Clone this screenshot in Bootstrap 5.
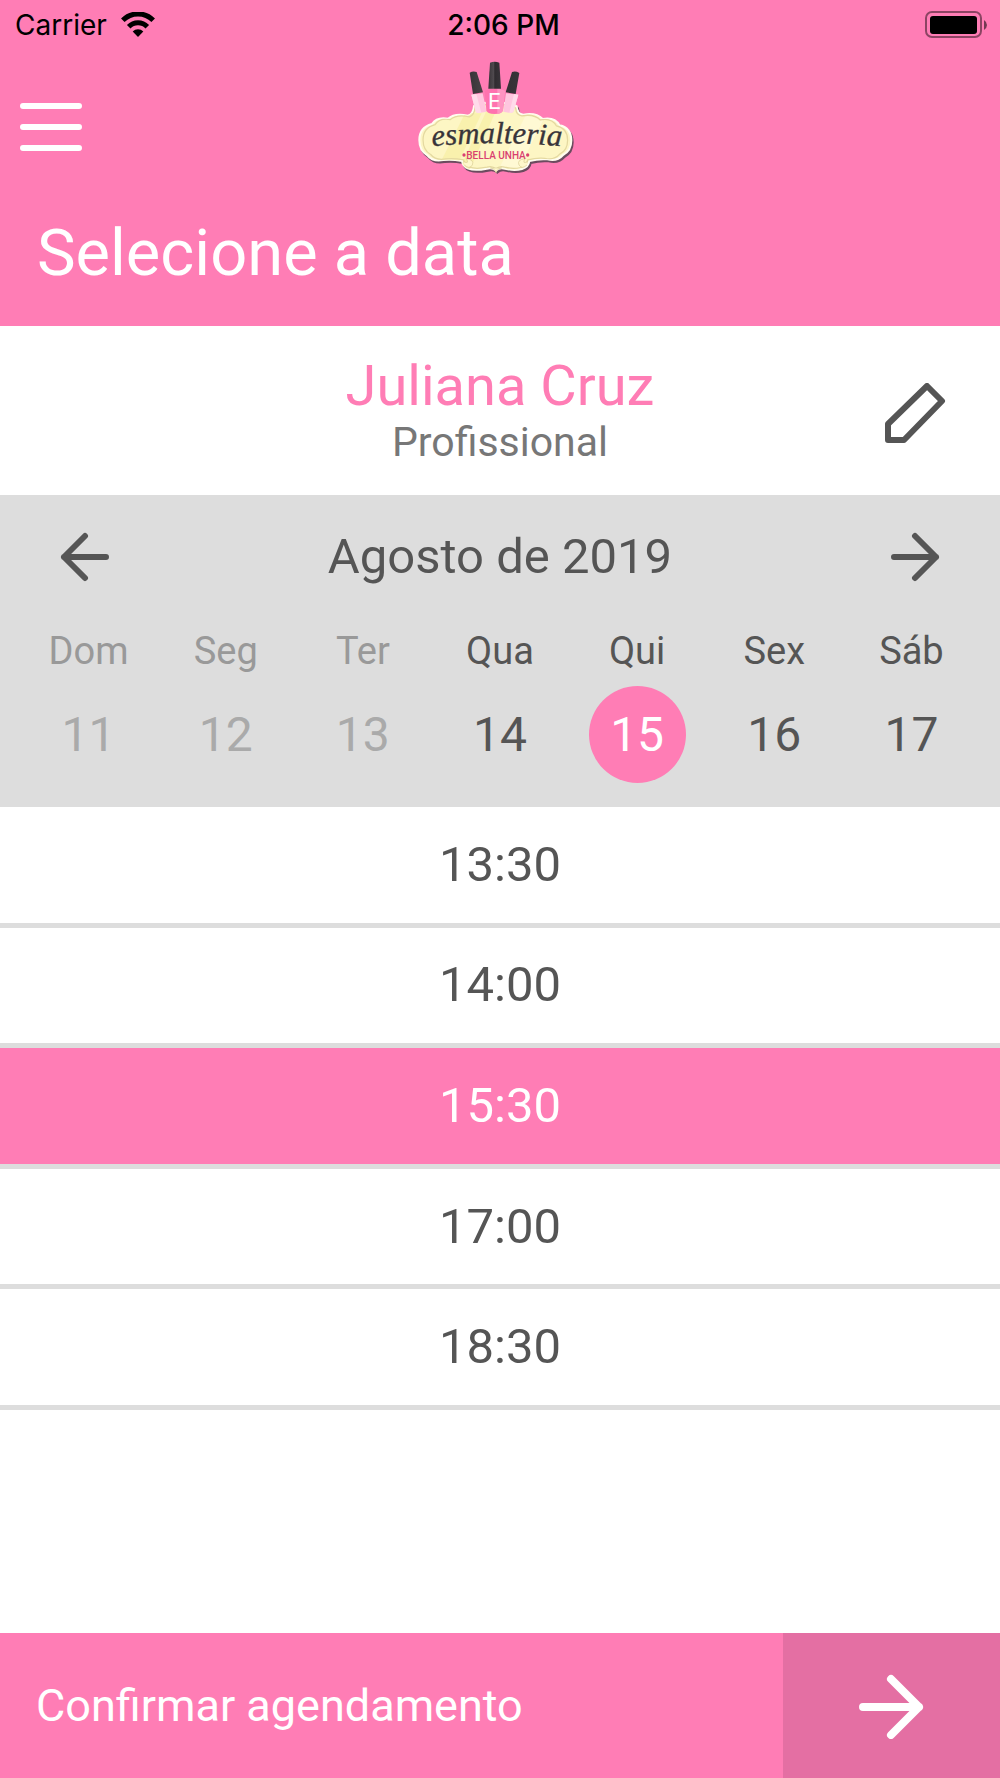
<!DOCTYPE html>
<html lang="pt-BR">
<head>
<meta charset="utf-8">
<meta name="viewport" content="width=device-width, initial-scale=1">
<title>Selecione a data</title>
<link href="https://cdn.jsdelivr.net/npm/bootstrap@5.3.0/dist/css/bootstrap.min.css" rel="stylesheet">
<style>
  :root { --pink: #ff7db5; --pink-dark: #e46fa3; --ink: #555; --line: #ddd; }
  body { font-family: Roboto, "Liberation Sans", sans-serif; color: var(--ink); background: #fff; }
  .btn { --bs-btn-padding-x: 0; --bs-btn-padding-y: 0; --bs-btn-border-width: 0; --bs-btn-border-radius: 0; color: inherit; }
  svg { display: block; }
  .brand-bg { background: var(--pink); color: #fff; }
  .status-bar { height: 50px; padding: 0 12px 0 15px; color: #000; font: 28px/50px Inter, sans-serif; }
  .status-bar .clock { font-weight: 500; padding: 0 8px 0 12px; }
  .signal { gap: 14px; }
  .top-nav { padding: 0 20px; }
  .side-slot { flex: 0 0 62px; }
  .page-title { font-size: 65px; line-height: 80px; font-weight: 400; padding: 9px 37px 33px; }
  .pro-bar { padding: 32px 0 25px; }
  .pro-name { font-size: 56px; line-height: 56px; font-weight: 400; color: var(--pink); }
  .pro-role { font-size: 41px; line-height: 56px; color: #777; }
  .edge-slot { flex: 0 0 170px; }
  .calendar { background: var(--line); padding-bottom: 24px; }
  .month { font-size: 49px; line-height: 124px; font-weight: 400; }
  .week { padding: 0 20px; }
  .weekday { font-size: 38px; line-height: 64px; margin-bottom: 3px; }
  .btn.day { width: 97px; height: 97px; border-radius: 50%; font-size: 48px; line-height: 97px; }
  .day-off .weekday { color: #999; }
  .btn.day:disabled { color: #aaa; opacity: 1; }
  .btn.day.chosen { background: var(--pink); color: #fff; }
  .slots { min-height: 603px; --bs-list-group-border-radius: 0; }
  .slots .list-group-item { border: 0; border-bottom: 5px solid var(--line); font-size: 49px; line-height: 56px; color: var(--ink); }
  .slots .list-group-item.active { margin: 0; background: var(--pink); color: #fff; }
  .confirm { min-height: 145px; font-size: 45px; line-height: 56px; }
  .confirm-label { padding: 0 36px; }
  .confirm-go { flex: 0 0 217px; background: var(--pink-dark); }
</style>
<script src="https://cdn.jsdelivr.net/npm/bootstrap@5.3.0/dist/js/bootstrap.bundle.min.js" defer></script>
</head>
<body>
<div class="d-flex flex-column min-vh-100">
  <header class="brand-bg">
    <div class="status-bar d-flex align-items-center">
      <div class="col d-flex align-items-center signal">
        <span>Carrier</span>
        <svg width="34" height="26" viewBox="0 0 34 26" fill="none" stroke="#000" stroke-width="5" aria-hidden="true">
          <path d="M1.800 8.200a21.500 21.500 0 0 1 30.400 0"/><path d="M7.700 14.700a13 13 0 0 1 18.600 0"/>
          <path d="M11.700 19.500a7.500 7.500 0 0 1 10.600 0L17 25z" fill="#000" stroke="none"/>
        </svg>
      </div>
      <div class="clock">2:06 PM</div>
      <div class="col d-flex justify-content-end">
        <svg width="64" height="28" viewBox="0 0 64 28" aria-hidden="true">
          <rect x="2" y="1" width="55" height="25" rx="6" fill="none" stroke="#000" stroke-opacity=".45" stroke-width="2"/>
          <rect x="6" y="5" width="47" height="18" rx="3"/>
          <path d="M60 9q3 2 3 5t-3 5z" fill-opacity=".55"/>
        </svg>
      </div>
    </div>
    <nav class="top-nav d-flex align-items-center justify-content-between">
      <button type="button" class="btn side-slot" aria-label="Menu">
        <svg width="62" height="50" viewBox="0 0 62 50" stroke="#fff" stroke-width="6" stroke-linecap="round"><path d="M3 4h56M3 25h56M3 46h56"/></svg>
      </button>
      <svg width="200" height="154" viewBox="0 0 600 462" role="img" aria-label="Esmalteria Bella Unha">
        <defs>
          <path id="plate" d="M288 362 Q277 351 260 356 Q225 363 205 356 Q188 350 186 333 Q155 327 130 330 Q98 336 82 316 Q58 302 58 270 Q58 232 96 222 Q110 200 144 206 Q164 188 204 197 Q220 192 222 168 Q240 155 286 160 Q332 155 350 169 Q352 193 370 194 Q408 187 428 207 Q464 200 479 226 Q514 234 514 271 Q514 303 489 315 Q472 335 442 328 Q415 326 388 333 Q386 351 366 357 Q342 363 315 356 Q298 351 288 362Z"/>
          <linearGradient id="cap" x1="0" x2="1"><stop offset="0" stop-color="#393438"/><stop offset=".45" stop-color="#514b50"/><stop offset=".5" stop-color="#302c30"/><stop offset="1" stop-color="#39343a"/></linearGradient>
          <clipPath id="plate-clip"><use href="#plate"/></clipPath>
          <path id="word-line" d="M97 289Q280 270 490 289"/>
        </defs>
        <use href="#plate" fill="#6b4b5f" stroke="#6b4b5f" stroke-width="6" transform="translate(4 6)"/>
        <use href="#plate" fill="#fdf6c4" stroke="#fffdf0" stroke-width="6"/>
        <g clip-path="url(#plate-clip)">
          <path d="M195 190h50L160 370h-55zM270 160h28L205 370h-32z" fill="#f7efa5" opacity=".75"/>
          <path d="M380 190h60l-90 180h-60z" fill="#fffbdc" opacity=".7"/>
          <use href="#plate" fill="none" stroke="#e4d9a0" stroke-width="4" transform="translate(14 13) scale(.951)"/>
        </g>
        <path d="M191 335q18 8 8-9 25 3 18 19-9 14-24 0M383 335q-18 8-8-9-25 3-18 19 9 14 24 0M288 368q-5-14-17-14h34q-12 0-17 14" fill="#fff8cc" stroke="#d8cc94" stroke-width="2"/>
        <path d="M214 134l34-4 12 55-24 4q-9 2-10-8z" fill="#ffc6df"/><path d="M214 134l15-2 15 56-8 1q-9 2-10-8z" fill="#ffdbea"/>
        <path d="M318 130l37 4-13 46q-2 9-10 9l-22-4z" fill="#ffc6df"/><path d="M342 132l13 2-13 46q-2 9-10 9l-4-1z" fill="#ffdbea"/>
        <path d="M209 68q10-6 21-2l19 61-30 5zM336 66q11-4 22 3l-11 63-30-5z" fill="url(#cap)"/>
        <path d="M254 122q30-12 62 0l-7 59q-2 11-25 11t-25-11z" fill="#ff72af"/><path d="M292 117q16 1 24 5l-7 59q-2 9-17 11z" fill="#ff94c2"/>
        <path d="M270 38q14-5 28 0l5 78h-38z" fill="url(#cap)"/>
        <text x="283" y="177" text-anchor="middle" font-family="Roboto" font-size="66" fill="#fff">E</text>
        <text font-family="Liberation Serif" font-style="italic" font-size="92" fill="#38343a" stroke="#38343a" stroke-width="1"><textPath href="#word-line">esmalteria</textPath></text>
        <text x="288" y="327" text-anchor="middle" font-family="Roboto" font-weight="500" font-size="30" fill="#d9416f">BELLA UNHA</text>
        <circle cx="192" cy="315" r="5" fill="#d9416f"/><circle cx="383" cy="315" r="5" fill="#d9416f"/>
      </svg>
      <span class="side-slot"></span>
    </nav>
    <h1 class="page-title mb-0">Selecione a data</h1>
  </header>

  <main>
    <section class="pro-bar d-flex align-items-center bg-white">
      <span class="edge-slot"></span>
      <div class="flex-fill text-center">
        <h2 class="pro-name mb-0">Juliana Cruz</h2>
        <p class="pro-role mb-0">Profissional</p>
      </div>
      <button type="button" class="btn edge-slot d-flex justify-content-center" aria-label="Editar profissional">
        <svg width="62" height="62" viewBox="0 0 62 62" fill="none" stroke="#555" stroke-width="6" stroke-linejoin="round"><path d="M4 57V41L43 3 58 18 20 57Z"/></svg>
      </button>
    </section>

    <section class="calendar">
      <div class="d-flex align-items-center">
        <button type="button" class="btn edge-slot d-flex justify-content-center" aria-label="Semana anterior">
          <svg width="50" height="50" viewBox="0 0 50 50" fill="none" stroke="#555" stroke-width="6" stroke-linecap="round" stroke-linejoin="round"><path d="M25 4 4 25l21 21M4 25h42"/></svg>
        </button>
        <h2 class="month flex-fill text-center mb-0">Agosto de 2019</h2>
        <button type="button" class="btn edge-slot d-flex justify-content-center" aria-label="Próxima semana">
          <svg width="50" height="50" viewBox="0 0 50 50" fill="none" stroke="#555" stroke-width="6" stroke-linecap="round" stroke-linejoin="round"><path d="M25 4l21 21-21 21M46 25H4"/></svg>
        </button>
      </div>
      <div class="week row g-0 text-center">
        <div class="col day-off"><div class="weekday" id="d0">Dom</div><button type="button" class="btn day" aria-describedby="d0" disabled>11</button></div>
        <div class="col day-off"><div class="weekday" id="d1">Seg</div><button type="button" class="btn day" aria-describedby="d1" disabled>12</button></div>
        <div class="col day-off"><div class="weekday" id="d2">Ter</div><button type="button" class="btn day" aria-describedby="d2" disabled>13</button></div>
        <div class="col"><div class="weekday" id="d3">Qua</div><button type="button" class="btn day" aria-describedby="d3">14</button></div>
        <div class="col"><div class="weekday" id="d4">Qui</div><button type="button" class="btn day chosen" aria-describedby="d4" aria-pressed="true">15</button></div>
        <div class="col"><div class="weekday" id="d5">Sex</div><button type="button" class="btn day" aria-describedby="d5">16</button></div>
        <div class="col"><div class="weekday" id="d6">Sáb</div><button type="button" class="btn day" aria-describedby="d6">17</button></div>
      </div>
    </section>

    <div class="slots list-group">
      <button type="button" class="list-group-item list-group-item-action flex-fill text-center">13:30</button>
      <button type="button" class="list-group-item list-group-item-action flex-fill text-center">14:00</button>
      <button type="button" class="list-group-item list-group-item-action flex-fill text-center active" aria-current="true">15:30</button>
      <button type="button" class="list-group-item list-group-item-action flex-fill text-center">17:00</button>
      <button type="button" class="list-group-item list-group-item-action flex-fill text-center">18:30</button>
    </div>
  </main>

  <footer class="mt-auto">
    <button type="button" class="btn brand-bg confirm w-100 d-flex align-items-stretch text-start">
      <span class="confirm-label flex-fill align-self-center">Confirmar agendamento</span>
      <span class="confirm-go d-flex align-items-center justify-content-center">
        <svg width="66" height="66" viewBox="0 0 66 66" fill="none" stroke="#fff" stroke-width="8" stroke-linecap="round" stroke-linejoin="round" aria-hidden="true"><path d="M32 6l28 28-28 28M60 34H4"/></svg>
      </span>
    </button>
  </footer>
</div>
</body>
</html>
